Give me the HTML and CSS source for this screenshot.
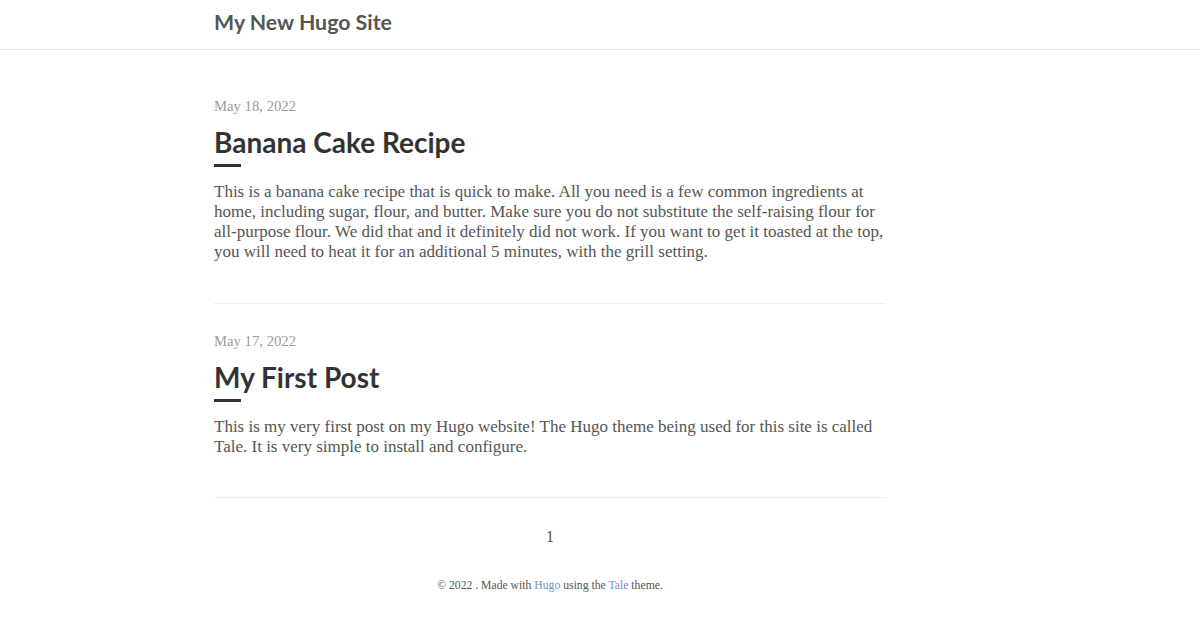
FILE: index.html
```html
<!DOCTYPE html>
<html lang="en">
<head>
<meta charset="utf-8">
<title>My New Hugo Site</title>
<link rel="stylesheet" href="styles.css">
</head>
<body>
<header class="nav">
  <div class="frame">
    <div class="nav-inner">
      <a class="site-title" href="#">My New Hugo Site</a>
    </div>
  </div>
</header>
<div class="frame">
  <main class="container">
    <article class="post">
      <div class="post-date">May 18, 2022</div>
      <h2 class="post-title">Banana Cake Recipe</h2>
      <div class="post-bar"></div>
      <p class="post-summary">This is a banana cake recipe that is quick to make. All you need is a few common ingredients at home, including sugar, flour, and butter. Make sure you do not substitute the self-raising flour for all-purpose flour. We did that and it definitely did not work. If you want to get it toasted at the top, you will need to heat it for an additional 5 minutes, with the grill setting.</p>
    </article>
    <hr class="sep">
    <article class="post">
      <div class="post-date">May 17, 2022</div>
      <h2 class="post-title">My First Post</h2>
      <div class="post-bar"></div>
      <p class="post-summary">This is my very first post on my Hugo website! The Hugo theme being used for this site is called Tale. It is very simple to install and configure.</p>
    </article>
    <hr class="sep sep-last">
    <div class="pagination">1</div>
  </main>
  <footer class="footer">© 2022 . Made with <a href="#">Hugo</a> using the <a href="#">Tale</a> theme.</footer>
</div>
</body>
</html>
```

FILE: styles.css
```css
html, body {
  margin: 0;
  padding: 0;
  background: #fff;
}
body {
  font-family: "Liberation Serif", "Times New Roman", serif;
  color: #555;
}
.frame {
  max-width: 1100px;
  height: 100%;
}
.nav {
  border-bottom: 1px solid #eaeaea;
  height: 49px;
}
.nav-inner {
  width: 672px;
  margin: 0 auto;
  height: 100%;
  display: flex;
  align-items: center;
}
.site-title {
  font-family: Lato, "Open Sans", sans-serif;
  font-weight: 700;
  font-size: 21.3px;
  color: #555;
  text-decoration: none;
  margin-top: -6px;
}
.container {
  width: 672px;
  margin: 0 auto;
  padding-top: 46px;
}
.post-date {
  font-size: 14.7px;
  line-height: 20px;
  color: #9a9a9a;
}
.post-title {
  font-family: Lato, "Open Sans", sans-serif;
  font-weight: 700;
  font-size: 28px;
  line-height: 36px;
  color: #333;
  margin: 8px 0 0;
}
.post-bar {
  width: 27px;
  height: 3px;
  background: #333;
  margin-top: 4px;
}
.post-summary {
  font-size: 17px;
  line-height: 20px;
  margin: 15px 0 0;
}
.sep {
  border: 0;
  border-top: 1px solid #eee;
  margin: 41px 0 27px;
}
.sep-last {
  margin: 40px 0 0;
}
.pagination {
  text-align: center;
  font-size: 16px;
  line-height: 20px;
  color: #555;
  margin-top: 29px;
}
.footer {
  text-align: center;
  font-size: 11.7px;
  line-height: 16px;
  color: #555;
  margin-top: 31px;
}
.footer a {
  color: #6f8fbf;
  text-decoration: none;
}
```
